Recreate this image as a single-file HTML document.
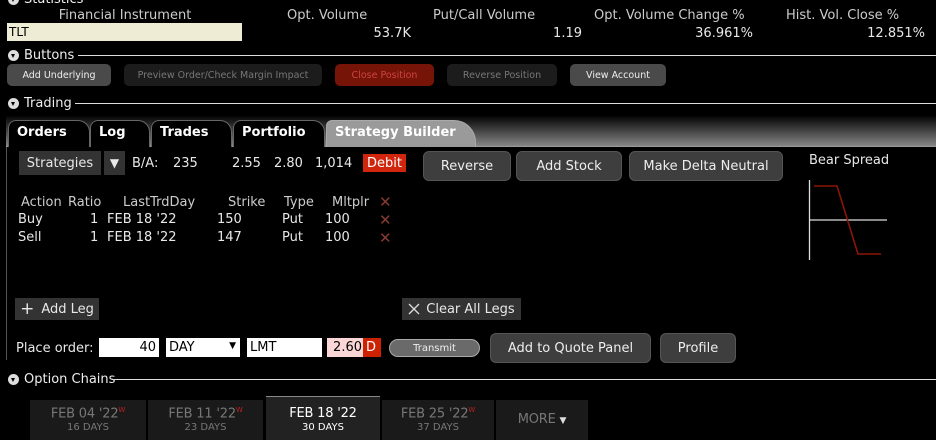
<!DOCTYPE html>
<html><head><meta charset="utf-8"><style>
*{margin:0;padding:0;box-sizing:border-box}
body{width:936px;height:440px;background:#000;color:#e8e8e8;font-family:"DejaVu Sans","Liberation Sans",sans-serif;font-size:13px;position:relative;overflow:hidden}
.a{position:absolute;white-space:nowrap}
.r{text-align:right}
.c{text-align:center}
.btn{position:absolute;display:flex;align-items:center;justify-content:center;white-space:nowrap}
.sm{font-size:9.5px;border-radius:5px}
.big{background:#3e3e3e;border:1px solid #555;border-radius:6px;font-size:13px;color:#eee}
.sec{position:absolute;left:8px;font-size:13px;color:#eee;display:flex;align-items:center}
.sec i{display:inline-block;width:11px;height:11px;border-radius:50%;background:#ddd;position:relative;margin-right:5px}
.sec i:after{content:"";position:absolute;left:3px;top:4px;border-left:2.5px solid transparent;border-right:2.5px solid transparent;border-top:4px solid #000}
.line{position:absolute;height:1px;background:#ddd;right:0}
.tab{position:absolute;top:120px;height:27px;background:#000;border:1px solid #666;border-bottom:none;border-radius:8px 12px 0 0;font-weight:bold;font-size:13px;color:#fff;padding:4px 0 0 8px}
.exp{position:absolute;top:400px;height:40px;background:#1a1a1a;text-align:center;color:#777}
.exp b{display:block;font-weight:normal;font-size:13px;margin-top:6px;letter-spacing:-0.2px}
.exp s{display:block;text-decoration:none;font-size:10px;margin-top:1px}
.exp sup{color:#b22;font-size:7px}
.x{color:#8a3a32;font-weight:bold;font-size:15px}
</style></head><body>
<div class="sec" style="top:-8px"><i></i>Statistics</div>
<div class="a c" style="left:30px;width:190px;top:8px;color:#ccc">Financial Instrument</div>
<div class="a" style="left:287px;top:8px;color:#ccc">Opt. Volume</div>
<div class="a" style="left:433px;top:8px;color:#ccc">Put/Call Volume</div>
<div class="a" style="left:594px;top:8px;color:#ccc">Opt. Volume Change %</div>
<div class="a" style="left:786px;top:8px;color:#ccc">Hist. Vol. Close %</div>
<div class="a" style="left:7px;top:23px;width:235px;height:18px;background:#efecd6;color:#000;padding:2px 2px;font-size:12px">TLT</div>
<div class="a r" style="right:525px;top:26px">53.7K</div>
<div class="a r" style="right:354px;top:26px">1.19</div>
<div class="a r" style="right:183px;top:26px">36.961%</div>
<div class="a r" style="right:11px;top:26px">12.851%</div>

<div class="sec" style="top:48px"><i></i>Buttons</div><div class="line" style="left:78px;top:55px"></div>
<div class="btn sm" style="left:7px;top:64px;width:104px;height:22px;background:#4a4a4a;color:#eee">Add Underlying</div>
<div class="btn sm" style="left:124px;top:64px;width:198px;height:22px;background:#1c1c1c;color:#777">Preview Order/Check Margin Impact</div>
<div class="btn sm" style="left:335px;top:64px;width:99px;height:22px;background:#761407;color:#c44">Close Position</div>
<div class="btn sm" style="left:447px;top:64px;width:110px;height:22px;background:#1c1c1c;color:#777">Reverse Position</div>
<div class="btn sm" style="left:570px;top:64px;width:96px;height:22px;background:#4a4a4a;color:#eee">View Account</div>

<div class="sec" style="top:96px"><i></i>Trading</div><div class="line" style="left:75px;top:103px"></div>
<div class="a" style="left:6px;top:115px;width:930px;height:32px;background:linear-gradient(#000,#8a8a8a)"></div>
<div class="a" style="left:6px;top:146px;width:930px;height:1px;background:#999"></div>
<div class="tab" style="left:8px;width:82px">Orders</div>
<div class="tab" style="left:90px;width:60px">Log</div>
<div class="tab" style="left:151px;width:81px">Trades</div>
<div class="tab" style="left:233px;width:92px">Portfolio</div>
<div class="tab" style="left:326px;width:150px;background:#9a9a9a;border-color:#aaa;border-radius:6px 22px 0 0">Strategy Builder</div>
<div class="a" style="left:6px;top:147px;width:1px;height:213px;background:#555"></div>

<div class="btn" style="left:19px;top:151px;width:82px;height:24px;background:#333">Strategies</div>
<div class="btn" style="left:104px;top:151px;width:21px;height:24px;background:#333;font-size:12px">▼</div>
<div class="a" style="left:132px;top:156px">B/A:</div>
<div class="a" style="left:173px;top:156px">235</div>
<div class="a" style="left:232px;top:156px">2.55</div>
<div class="a" style="left:274px;top:156px">2.80</div>
<div class="a" style="left:315px;top:156px">1,014</div>
<div class="btn" style="left:363px;top:154px;width:43px;height:18px;background:#d0260d;color:#fff">Debit</div>
<div class="btn big" style="left:423px;top:151px;width:88px;height:30px">Reverse</div>
<div class="btn big" style="left:516px;top:151px;width:106px;height:30px">Add Stock</div>
<div class="btn big" style="left:629px;top:151px;width:154px;height:30px">Make Delta Neutral</div>
<div class="a" style="left:809px;top:153px">Bear Spread</div>
<svg class="a" style="left:0;top:0" width="936" height="440"><path d="M809.5 180V260M809 220H887" stroke="#ddd" stroke-width="1.3" fill="none"/><path d="M814 186H837L858 254H881" stroke="#8b1608" stroke-width="1.6" fill="none"/></svg>

<div class="a" style="left:21px;top:195px;color:#ccc">Action</div>
<div class="a" style="left:68px;top:195px;color:#ccc">Ratio</div>
<div class="a" style="left:123px;top:195px;color:#ccc">LastTrdDay</div>
<div class="a" style="left:228px;top:195px;color:#ccc">Strike</div>
<div class="a" style="left:284px;top:195px;color:#ccc">Type</div>
<div class="a" style="left:332px;top:195px;color:#ccc">Mltplr</div>
<div class="a x" style="left:379px;top:193px">✕</div>
<div class="a" style="left:18px;top:212px">Buy</div><div class="a" style="left:90px;top:212px">1</div><div class="a" style="left:107px;top:212px">FEB 18 '22</div><div class="a" style="left:217px;top:212px">150</div><div class="a" style="left:282px;top:212px">Put</div><div class="a" style="left:325px;top:212px">100</div><div class="a x" style="left:379px;top:211px">✕</div>
<div class="a" style="left:18px;top:230px">Sell</div><div class="a" style="left:90px;top:230px">1</div><div class="a" style="left:107px;top:230px">FEB 18 '22</div><div class="a" style="left:217px;top:230px">147</div><div class="a" style="left:282px;top:230px">Put</div><div class="a" style="left:325px;top:230px">100</div><div class="a x" style="left:379px;top:229px">✕</div>

<div class="btn" style="left:15px;top:298px;width:84px;height:22px;background:#333"><span style="font-size:17px;margin-right:7px">+</span>Add Leg</div>
<div class="btn" style="left:402px;top:298px;width:119px;height:22px;background:#333"><svg width="12" height="12" style="margin-right:6px"><path d="M1 1L11 11M11 1L1 11" stroke="#ddd" stroke-width="1.3"/></svg>Clear All Legs</div>

<div class="a" style="left:16px;top:341px">Place order:</div>
<div class="a r" style="left:99px;top:338px;width:60px;height:19px;background:#fff;color:#000;padding:2px 3px">40</div>
<div class="a" style="left:166px;top:338px;width:74px;height:19px;background:#fff;color:#000;padding:2px 3px">DAY<span style="position:absolute;right:4px;top:3px;font-size:9px">▼</span></div>
<div class="a" style="left:247px;top:338px;width:75px;height:19px;background:#fff;color:#000;padding:2px 3px">LMT</div>
<div class="a r" style="left:327px;top:338px;width:36px;height:19px;background:#fbd6d6;color:#000;padding:2px 1px">2.60</div>
<div class="a" style="left:363px;top:338px;width:18px;height:19px;background:#cc2200;color:#fff;padding:2px 3px">D</div>
<div class="btn" style="left:389px;top:339px;width:91px;height:18px;background:#6a6a6a;border:1px solid #aaa;border-radius:9px;font-size:10px;color:#eee">Transmit</div>
<div class="btn big" style="left:490px;top:333px;width:161px;height:30px">Add to Quote Panel</div>
<div class="btn big" style="left:660px;top:333px;width:76px;height:30px">Profile</div>

<div class="sec" style="top:372px"><i></i>Option Chains</div><div class="line" style="left:114px;top:379px"></div>
<div class="exp" style="left:30px;width:116px"><b>FEB 04 '22<sup>W</sup></b><s>16 DAYS</s></div>
<div class="exp" style="left:148px;width:115px"><b>FEB 11 '22<sup>W</sup></b><s>23 DAYS</s></div>
<div class="exp" style="left:266px;width:114px;top:396px;height:44px;background:#222;border-top:1px solid #888;color:#fff"><b style="margin-top:9px">FEB 18 '22</b><s>30 DAYS</s></div>
<div class="exp" style="left:382px;width:112px"><b>FEB 25 '22<sup>W</sup></b><s>37 DAYS</s></div>
<div class="exp" style="left:496px;width:92px"><b style="margin-top:12px">MORE <span style="font-size:9px;color:#ddd">▼</span></b></div>
</body></html>
